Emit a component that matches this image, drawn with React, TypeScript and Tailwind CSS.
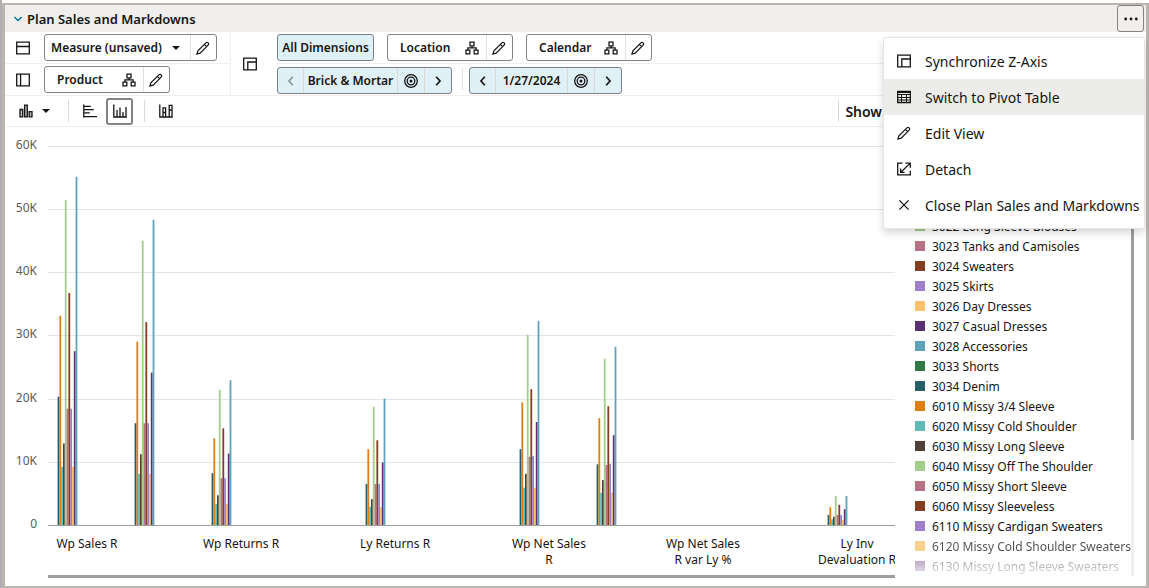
import { ReactNode, useState } from "react";

type IconProps = { children: ReactNode; className?: string };

function Icon({ children, className = "h-[14px] w-[14px]" }: IconProps) {
  return (
    <svg viewBox="0 0 14 14" className={`shrink-0 ${className}`} fill="none" stroke="currentColor" strokeWidth="1.3" aria-hidden="true">
      {children}
    </svg>
  );
}

const RowAxisIcon = () => (
  <Icon>
    <path d="M.7 1.2h12.6v11.6H.7zM.7 5.5h12.6" />
  </Icon>
);

const ColumnAxisIcon = () => (
  <Icon>
    <path d="M.7 1.2h12.6v11.6H.7zM4.6 1.2v11.6" />
  </Icon>
);

const ZAxisIcon = () => (
  <Icon>
    <path d="M.7 1.2h12.6v11.6H.7zM4.8 12.8V5h8.5" />
  </Icon>
);

const PencilIcon = () => (
  <Icon>
    <path d="M1 13l.9-3.2 8-7.9a1.5 1.5 0 0 1 2.2 2.2l-7.9 8zM8.4 3.4l2.2 2.2" strokeWidth="1.2" />
    <path d="M.6 13.4l.6-2.4 1.8 1.8z" fill="currentColor" stroke="none" />
  </Icon>
);

const HierarchyIcon = () => (
  <Icon>
    <path d="M5 1.2h4v3.6H5zM1 9.2h3.8v3.6H1zM9.2 9.2H13v3.6H9.2zM7 4.8v2.1M2.9 9.2V6.9h8.2v2.3" />
  </Icon>
);

const TargetIcon = () => (
  <Icon>
    <circle cx="7" cy="7" r="6.3" />
    <circle cx="7" cy="7" r="3.8" />
    <circle cx="7" cy="7" r="1.5" fill="currentColor" stroke="none" />
  </Icon>
);

const TableIcon = () => (
  <Icon>
    <path d="M.6 1.5h12.8v11H.6z" />
    <path d="M.6 2.5h12.8M.6 4.5h12.8M.6 7.5h12.8M.6 10h12.8M4.5 4.5v8M9.5 4.5v8" strokeWidth="1" />
  </Icon>
);

const DetachIcon = () => (
  <Icon>
    <path d="M5.5 1.2H.7v11.6h12.6V8.8M3.8 10.2l9-8.6M8.4 1.2h4.9v4.6M3.6 6.6v3.8h4" />
  </Icon>
);

const CloseIcon = () => (
  <Icon>
    <path d="M2.4 2.4l9.2 9.2M11.6 2.4l-9.2 9.2" />
  </Icon>
);

const ChevronLeft = () => (
  <Icon>
    <path d="M8.8 2.8L5 7l3.8 4.2" strokeWidth="1.7" />
  </Icon>
);

const ChevronRight = () => (
  <Icon>
    <path d="M5.2 2.8L9 7l-3.8 4.2" strokeWidth="1.7" />
  </Icon>
);

const BarTypeIcon = () => (
  <Icon>
    <path d="M1 5.5h2.7v7.3H1zM5.6 1.2h2.7v11.6H5.6zM10.2 7.6H13v5.2h-2.8z" fill="#bbb" />
  </Icon>
);

const HorizontalIcon = () => (
  <Icon>
    <path d="M.8 .5v13M.8 2.4h7M.8 5.6h10M.8 8.8h6M.8 12.6H14" />
  </Icon>
);

const VerticalIcon = () => (
  <Icon>
    <path d="M.8 .5v13M.2 13h13.6M4 13V6M7 13V3.5M10 13V8M13 13V3" />
  </Icon>
);

const StackedIcon = () => (
  <Icon>
    <path d="M.8 .5v13M.2 13h13.6M4 13V3.8h2.6V13M4 8.5h2.6M10.2 13V1.3h2.8V13M10.2 6h2.8" />
  </Icon>
);

const Caret = ({ className = "" }: { className?: string }) => (
  <svg viewBox="0 0 8 4" className={`h-1 w-2 shrink-0 fill-current ${className}`} aria-hidden="true">
    <path d="M0 0h8L4 4z" />
  </svg>
);

function EditButton({ name }: { name: string }) {
  return (
    <button aria-label={`Edit ${name}`} className="flex w-[26px] items-center justify-center border-l border-[#e3e1de] pr-px">
      <PencilIcon />
    </button>
  );
}

function DimensionChip({ name }: { name: string }) {
  return (
    <div className="flex h-[27px] w-[126px] rounded-[3px] border border-[#85827f] bg-white">
      <button className="flex flex-1 items-center justify-between pr-[7px] pl-3 font-semibold">
        <span>{name}</span>
        <HierarchyIcon />
      </button>
      <EditButton name={name} />
    </div>
  );
}

type PagerProps = { label: string; className: string; atStart?: boolean };

function Pager({ label, className, atStart = false }: PagerProps) {
  return (
    <div className={`flex h-[27px] divide-x divide-[#dcd9d5] rounded-[3px] border border-[#7a8287] bg-[#dff0f7] ${className}`}>
      <button aria-label={`Previous ${label}`} disabled={atStart} className="flex w-[26px] items-center justify-center disabled:text-[#8d9498]">
        <ChevronLeft />
      </button>
      <button className="flex-1 font-semibold whitespace-nowrap">{label}</button>
      <button aria-label={`Find ${label}`} className="flex w-[27px] items-center justify-center">
        <TargetIcon />
      </button>
      <button aria-label={`Next ${label}`} className="flex w-[26px] items-center justify-center">
        <ChevronRight />
      </button>
    </div>
  );
}

const seriesColors = [
  "#265e66", "#de7f11", "#5fb9b5", "#4f4137", "#a2cd8b", "#b77286",
  "#853f20", "#9f7fcc", "#fac26b", "#5a3172", "#61a2bb",
];

// slot is the position on the axis, two slots per measure; values are in thousands
const clusters = [
  { slot: 0, values: [20.3, 33.1, 9.2, 12.9, 51.4, 18.4, 36.7, 18.4, 9.2, 27.5, 55.1] },
  { slot: 1, values: [16.1, 29, 8.1, 11.2, 45, 16.1, 32.1, 16.1, 8.1, 24.1, 48.3] },
  { slot: 2, values: [8.2, 13.7, 3.3, 4.7, 21.4, 7.4, 15.3, 7.4, 3.3, 11.3, 22.9] },
  { slot: 4, values: [6.5, 12, 2.9, 4.1, 18.7, 6.5, 13.4, 6.5, 2.8, 9.9, 20] },
  { slot: 6, values: [12, 19.4, 5.9, 8.1, 30.1, 10.8, 21.5, 10.9, 5.9, 16.3, 32.3] },
  { slot: 7, values: [9.6, 16.9, 5.1, 7.1, 26.3, 9.5, 18.8, 9.7, 5.1, 14.2, 28.2] },
  { slot: 10, values: [1.6, 2.8, 0.9, 1.3, 4.6, 1.6, 3.2, 1.6, 0.8, 2.5, 4.6] },
];

const measures = [
  ["Wp Sales R"],
  ["Wp Returns R"],
  ["Ly Returns R"],
  ["Wp Net Sales", "R"],
  ["Wp Net Sales", "R var Ly %"],
  ["Ly Inv", "Devaluation R"],
];

const BASELINE = 398;
const PER_THOUSAND = 6.32;
const SLOT_WIDTH = 77;
const BAR_WIDTH = 1.8;

function Chart() {
  return (
    <svg className="h-[446px] w-full overflow-hidden text-xs" role="img" aria-label="Sales by measure">
      {[60, 50, 40, 30, 20, 10, 0].map((tick) => {
        const y = Math.round(BASELINE - tick * PER_THOUSAND);
        return (
          <g key={tick}>
            <rect x="43" y={y} width="100%" height="1" fill={tick === 0 ? "#9e9e9e" : "#e4e5ec"} />
            <text x="32" y={y + 3} textAnchor="end" fill="#5c5a58">
              {tick === 0 ? "0" : `${tick}K`}
            </text>
          </g>
        );
      })}
      {clusters.map(({ slot, values }) =>
        values.map((value, i) => (
          <rect
            key={`${slot}-${i}`}
            x={52.6 + slot * SLOT_WIDTH + i * BAR_WIDTH}
            y={BASELINE - value * PER_THOUSAND}
            width={BAR_WIDTH}
            height={value * PER_THOUSAND}
            fill={seriesColors[i]}
          />
        ))
      )}
      {measures.map((lines, i) => (
        <text key={i} textAnchor="middle" fill="#161513">
          {lines.map((line, n) => (
            <tspan key={n} x={82 + i * SLOT_WIDTH * 2} y={421 + n * 16}>
              {line}
            </tspan>
          ))}
        </text>
      ))}
    </svg>
  );
}

const legend = [
  { name: "3022 Long Sleeve Blouses", color: "#a2cd8b" },
  { name: "3023 Tanks and Camisoles", color: "#b77286" },
  { name: "3024 Sweaters", color: "#853f20" },
  { name: "3025 Skirts", color: "#9f7fcc" },
  { name: "3026 Day Dresses", color: "#fac26b" },
  { name: "3027 Casual Dresses", color: "#5a3172" },
  { name: "3028 Accessories", color: "#61a2bb" },
  { name: "3033 Shorts", color: "#307846" },
  { name: "3034 Denim", color: "#265e66" },
  { name: "6010 Missy 3/4 Sleeve", color: "#de7f11" },
  { name: "6020 Missy Cold Shoulder", color: "#5fb9b5" },
  { name: "6030 Missy Long Sleeve", color: "#4f4137" },
  { name: "6040 Missy Off The Shoulder", color: "#a2cd8b" },
  { name: "6050 Missy Short Sleeve", color: "#b77286" },
  { name: "6060 Missy Sleeveless", color: "#853f20" },
  { name: "6110 Missy Cardigan Sweaters", color: "#9f7fcc" },
  { name: "6120 Missy Cold Shoulder Sweaters", color: "#fac26b" },
  { name: "6130 Missy Long Sleeve Sweaters", color: "#5a3172" },
];

const menuItems = [
  { label: "Synchronize Z-Axis", icon: <ZAxisIcon /> },
  { label: "Switch to Pivot Table", icon: <TableIcon />, active: true },
  { label: "Edit View", icon: <PencilIcon /> },
  { label: "Detach", icon: <DetachIcon /> },
  { label: "Close Plan Sales and Markdowns", icon: <CloseIcon /> },
];

export default function App() {
  const [menuOpen, setMenuOpen] = useState(true);

  return (
    <div className="min-h-screen border-l-2 border-[#b0aeb1] bg-white pt-[3px] font-['Noto_Sans','Open_Sans',sans-serif] text-xs text-[#161513]">
      <section className="relative border-t-2 border-r-3 border-b-2 border-l-3 border-[#bbb5af]">
        <header className="flex h-[27px] items-center bg-[#f0efed] pr-0.5 pl-2">
          <button aria-label="Collapse" className="text-[#04758f]">
            <svg viewBox="0 0 10 10" className="h-2.5 w-2.5" fill="none" stroke="currentColor" strokeWidth="1.4">
              <path d="M1.4 3l3.6 3.6L8.6 3" />
            </svg>
          </button>
          <h1 className="ml-1 flex-1 pt-0.5 text-[13px] font-semibold">Plan Sales and Markdowns</h1>
          <button
            aria-label="More actions"
            aria-expanded={menuOpen}
            onClick={() => setMenuOpen(!menuOpen)}
            className="flex h-[27px] w-[27px] items-center justify-center rounded-[3px] border border-[#85827f]"
          >
            <svg viewBox="0 0 14 4" className="h-1 w-[14px] fill-current">
              <circle cx="1.7" cy="2" r="1.4" />
              <circle cx="7" cy="2" r="1.4" />
              <circle cx="12.3" cy="2" r="1.4" />
            </svg>
          </button>
        </header>

        <div className="flex border-b border-[#f0efee]">
          <div className="w-[226px] shrink-0 border-r border-[#f0efee]">
            <div className="flex h-8 items-center gap-[14px] border-b border-[#f0efee] pl-[11px]">
              <RowAxisIcon />
              <div className="flex h-[27px] w-[173px] rounded-[3px] border border-[#85827f]">
                <div className="relative flex flex-1">
                  <select aria-label="Measure" className="w-full appearance-none bg-transparent pl-1.5 font-semibold">
                    <option>Measure (unsaved)</option>
                  </select>
                  <Caret className="pointer-events-none absolute top-[11px] right-2.5" />
                </div>
                <EditButton name="Measure" />
              </div>
            </div>
            <div className="flex h-[31px] items-center gap-[14px] pl-[11px]">
              <ColumnAxisIcon />
              <DimensionChip name="Product" />
            </div>
          </div>
          <div className="flex flex-1 items-center pl-3">
            <ZAxisIcon />
            <div className="ml-5 flex-1">
              <div className="flex h-8 items-center gap-[13px] border-b border-[#f0efee]">
                <button className="h-[27px] w-[97px] rounded-[3px] border border-[#7a8287] bg-[#dff0f7] font-semibold whitespace-nowrap">
                  All Dimensions
                </button>
                <DimensionChip name="Location" />
                <DimensionChip name="Calendar" />
              </div>
              <div className="flex h-[31px] items-end pb-px">
                <Pager label="Brick & Mortar" className="w-[175px]" atStart />
                <div className="mr-1.5 ml-2.5 h-[22px] self-center border-l border-[#e3e1de]" />
                <Pager label="1/27/2024" className="w-[153px]" />
              </div>
            </div>
          </div>
        </div>

        <div className="flex h-[31px] items-center border-b border-[#f0efee] pl-[14px]">
          <button aria-label="Chart type" className="flex items-center gap-[9px]">
            <BarTypeIcon />
            <Caret />
          </button>
          <div className="mr-3.5 ml-[18px] h-[22px] border-l border-[#dcdad8]" />
          <button aria-label="Horizontal bars">
            <HorizontalIcon />
          </button>
          <button aria-label="Vertical bars" aria-pressed="true" className="ml-[9px] flex h-[27px] w-[27px] items-center justify-center rounded-[3px] border-2 border-[#85827f]">
            <VerticalIcon />
          </button>
          <div className="mr-3.5 ml-[11px] h-[22px] border-l border-[#dcdad8]" />
          <button aria-label="Stacked bars">
            <StackedIcon />
          </button>
          <div className="mr-[264px] ml-auto flex h-[22px] items-center border-l border-[#dcdad8] pt-0.5 pl-1.5 text-sm font-semibold">Show</div>
        </div>

        <div className="flex">
          <div className="min-w-0 flex-1 pb-2">
            <Chart />
            <div className="mt-0.5 ml-[43px] h-[3px] bg-[#9e9e9e]" />
          </div>
          <div className="flex h-[449px] w-[251px] shrink-0 overflow-hidden pt-[89px] pl-5">
            <ul className="w-[216px]">
              {legend.map(({ name, color }, i) => (
                <li
                  key={name}
                  className={`flex h-5 items-center gap-[7px] whitespace-nowrap ${
                    i === legend.length - 1
                      ? "mask-linear-180 mask-linear-from-black/50 mask-linear-to-black/10"
                      : i === legend.length - 2
                        ? "opacity-75"
                        : ""
                  }`}
                >
                  <span className="h-2.5 w-2.5" style={{ backgroundColor: color }} />
                  <span className="pt-0.5">{name}</span>
                </li>
              ))}
            </ul>
            <div className="h-full w-[3px] bg-[#efefef]">
              <div className="h-56 bg-[#9e9e9e]" />
            </div>
          </div>
        </div>

        {menuOpen && (
          <ul role="menu" className="absolute top-8 right-px w-[262px] rounded-[3px] border border-[#e6e5e3] bg-white py-[5px] text-sm shadow-[0_4px_8px_rgba(0,0,0,0.16)]">
            {menuItems.map(({ label, icon, active }) => (
              <li key={label} role="none">
                <button role="menuitem" className={`flex h-9 w-full items-center gap-3.5 pl-[13px] whitespace-nowrap ${active ? "bg-[#ececea]" : "hover:bg-[#ececea]"}`}>
                  {icon}
                  <span className="pt-0.5">{label}</span>
                </button>
              </li>
            ))}
          </ul>
        )}
      </section>
    </div>
  );
}
